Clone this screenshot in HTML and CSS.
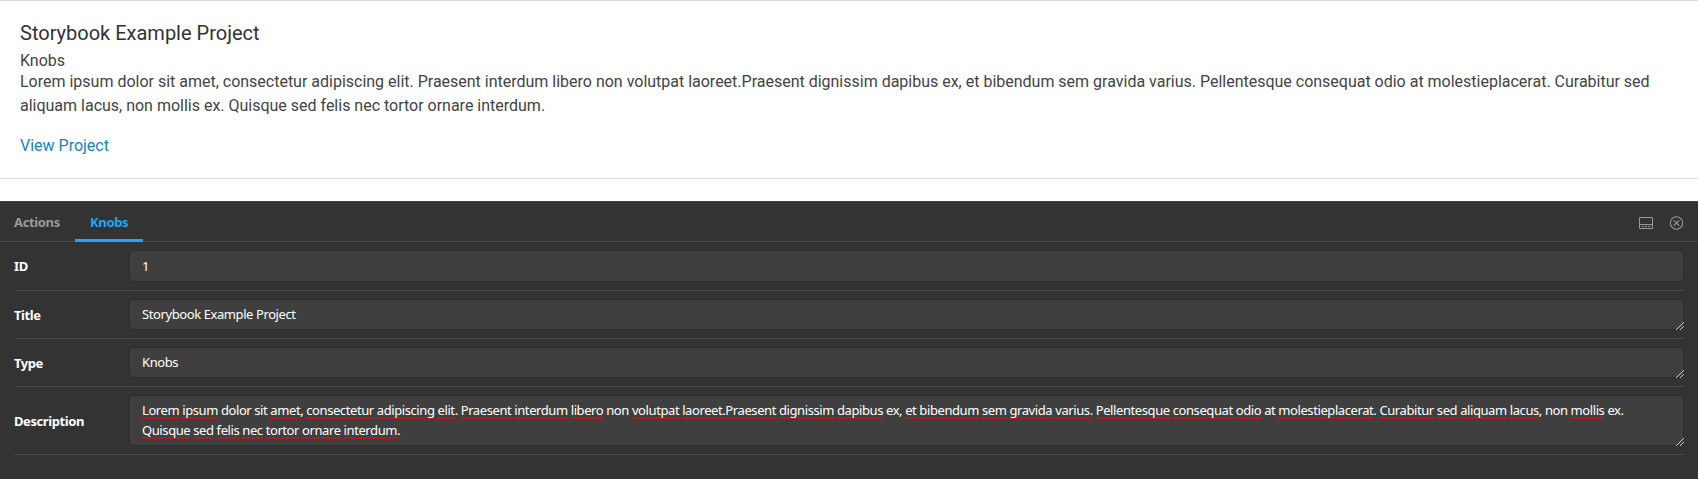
FILE: index.html
```html
<!DOCTYPE html>
<html lang="en">
<head>
<meta charset="utf-8">
<title>Storybook</title>
<link rel="stylesheet" href="styles.css">
</head>
<body>
<section class="preview">
  <article class="card">
    <h1 class="card-title">Storybook Example Project</h1>
    <p class="card-type">Knobs</p>
    <p class="card-text">Lorem ipsum dolor sit amet, consectetur adipiscing elit. Praesent interdum libero non volutpat laoreet.Praesent dignissim dapibus ex, et bibendum sem gravida varius. Pellentesque consequat odio at molestieplacerat. Curabitur sed<br>aliquam lacus, non mollis ex. Quisque sed felis nec tortor ornare interdum.</p>
    <a class="card-link">View Project</a>
  </article>
</section>
<section class="panel">
  <header class="tabs">
    <a class="tab">Actions</a>
    <a class="tab tab-active">Knobs</a>
    <div class="tools">
      <svg class="icon" width="15" height="14" viewBox="0 0 15 14"><path d="M.5 1.5h13v11H.5zM1 8.5h12" fill="none" stroke="#999"/><path d="M3 10.5h2M6 10.5h2M9 10.5h2" stroke="#999"/></svg>
      <svg class="icon" width="15" height="14" viewBox="0 0 15 14"><circle cx="7.5" cy="7" r="6.2" fill="none" stroke="#999" stroke-width="1.1"/><path d="M4.8 4.3l5.4 5.4M10.2 4.3l-5.4 5.4" stroke="#999" stroke-width="1.2"/></svg>
    </div>
  </header>
  <div class="form">
    <div class="row"><label class="label">ID</label><div class="field field-input">1</div></div>
    <div class="row"><label class="label">Title</label><div class="field">Storybook Example Project<svg class="grip" width="8" height="8" viewBox="0 0 8 8"><path d="M0 8L8 0M4 8L8 4"/></svg></div></div>
    <div class="row"><label class="label">Type</label><div class="field">Knobs<svg class="grip" width="8" height="8" viewBox="0 0 8 8"><path d="M0 8L8 0M4 8L8 4"/></svg></div></div>
    <div class="row"><label class="label">Description</label><div class="field"><span class="line"><u>Lorem</u> <u>ipsum</u> dolor sit <u>amet</u>, <u>consectetur</u> <u>adipiscing</u> <u>elit</u>. <u>Praesent</u> <u>interdum</u> <u>libero</u> non <u>volutpat</u> <u>laoreet.Praesent</u> <u>dignissim</u> <u>dapibus</u> ex, <u>et</u> <u>bibendum</u> <u>sem</u> <u>gravida</u> <u>varius</u>. <u>Pellentesque</u> <u>consequat</u> <u>odio</u> at <u>molestieplacerat</u>. <u>Curabitur</u> <u>sed</u> <u>aliquam</u> <u>lacus</u>, non <u>mollis</u> ex.</span><span class="line"><u>Quisque</u> <u>sed</u> <u>felis</u> <u>nec</u> <u>tortor</u> <u>ornare</u> <u>interdum</u>.</span><svg class="grip" width="8" height="8" viewBox="0 0 8 8"><path d="M0 8L8 0M4 8L8 4"/></svg></div></div>
  </div>
</section>
</body>
</html>
```
FILE: styles.css
```css
* { box-sizing: border-box; }
body { margin: 0; height: 479px; overflow: hidden; background: #fff; }
.preview { height: 201px; font: 16px/24px Roboto, sans-serif; color: #414446; }
.card { height: 179px; padding: 20px; border-top: 1px solid #ddd; border-bottom: 1px solid #ddd; }
.card-title { margin: 0; font-size: 20px; line-height: 24px; font-weight: 400; color: #303335; }
.card-type { margin: 5px 0 0; line-height: 22px; }
.card-text { margin: -2px 0 16px; white-space: nowrap; letter-spacing: -.006px; }
.card-link { color: #1583c4; }
.panel { height: 278px; background: #333; border-top: 1px solid #444; font: 13px/20px "Noto Sans", sans-serif; color: #fff; }
.tabs { height: 40px; display: flex; border-bottom: 1px solid #484848; padding-right: 14px; }
.tab { height: 40px; padding: 0 15px 0 14px; line-height: 41px; font-weight: 700; color: #999; letter-spacing: -.35px; width: 75px; }
.tab-active { width: 68px; color: #1ea7fd; border-bottom: 3px solid #1ea7fd; padding-left: 15px; }
.tools { margin-left: auto; padding-top: 2px; display: flex; gap: 15px; align-items: center; }
.icon { display: block; }
.form { padding: 0 14px; }
.row { display: flex; align-items: center; padding: 8px 0; border-bottom: 1px solid #484848; }
.label { width: 115px; font-weight: 700; letter-spacing: -.42px; }
.field { position: relative; flex: 1; min-width: 0; padding: 5px 12px 6px 13px; background: #3f3f3f; border-radius: 4px; box-shadow: inset 0 0 0 1px #2d2d2d; letter-spacing: -.409px; white-space: nowrap; color: #fff; }
.field-input { padding: 6px 13px; }
.line { display: block; }
u { text-decoration: none; background: repeating-linear-gradient(90deg, #f00 0 2px, #f003 2px 4px) 0 100% / 100% 1px no-repeat, repeating-linear-gradient(90deg, #f006 0 2px, #f00 2px 4px) 0 calc(100% - 1px) / 100% 1px no-repeat; }
.grip { position: absolute; right: 0; bottom: 0; fill: none; stroke: #ccc; }
```
